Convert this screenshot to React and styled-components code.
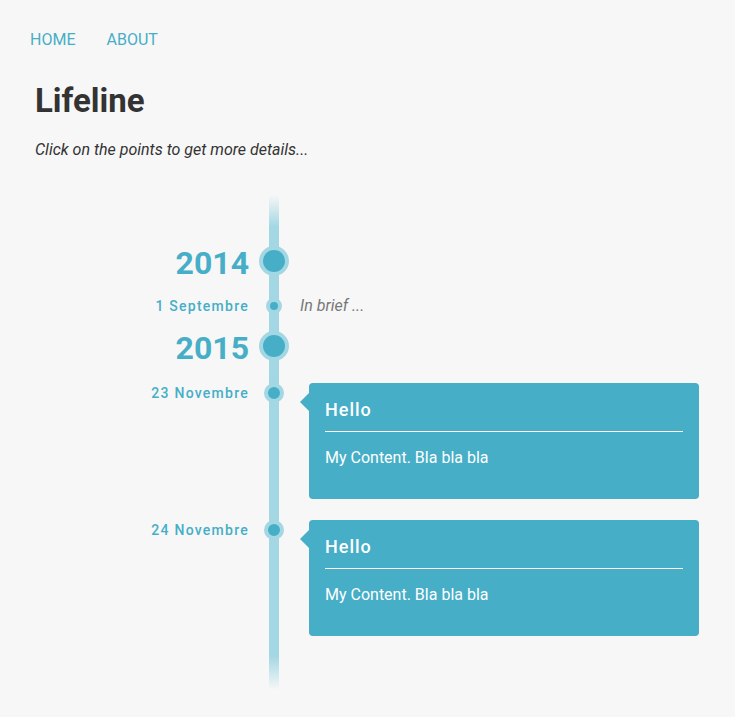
import React from "react";
import styled, { createGlobalStyle } from "styled-components";

const teal = "#46aec7";
const lightTeal = "#a3d7e3";

const GlobalStyle = createGlobalStyle`
  body {
    margin: 0;
    background: #f7f7f7;
    font-family: Roboto, "Liberation Sans", sans-serif;
    color: #333333;
  }
`;

const Nav = styled.nav`
  display: flex;
  gap: 31px;
  padding: 30px 30px 0;
`;

const NavLink = styled.a`
  color: ${teal};
  font-size: 16px;
  line-height: 19px;
  text-decoration: none;
  text-transform: uppercase;
  cursor: pointer;
`;

const Main = styled.main`
  padding: 0 35px;
`;

const Title = styled.h1`
  margin: 31px 0 0;
  font-size: 33px;
  line-height: 41px;
  font-weight: 700;
  color: #333333;
`;

const Subtitle = styled.p`
  margin: 19px 0 0;
  font-size: 16px;
  line-height: 19px;
  font-style: italic;
`;

const Timeline = styled.div`
  position: relative;
  margin-top: 36px;
  padding: 51px 0 54px;
  display: flex;
  flex-direction: column;

  &::before {
    content: "";
    position: absolute;
    top: 0;
    bottom: 0;
    left: 234px;
    width: 10px;
    background: linear-gradient(
      to bottom,
      rgba(163, 215, 227, 0) 0,
      ${lightTeal} 32px,
      ${lightTeal} calc(100% - 34px),
      rgba(163, 215, 227, 0) 100%
    );
  }
`;

const Row = styled.div`
  position: relative;
  display: grid;
  grid-template-columns: 224px 30px 410px;
  align-items: start;
  margin-top: ${({ $top }) => $top}px;
`;

const Label = styled.div`
  padding-right: 10px;
  text-align: right;
  color: ${teal};
`;

const Year = styled(Label)`
  margin: 2px 0 -2px;
  font-size: 32px;
  line-height: 30px;
  font-weight: 700;
`;

const DateLabel = styled(Label)`
  font-size: 14px;
  line-height: ${({ $h }) => $h}px;
  font-weight: 500;
  letter-spacing: 1.25px;
`;

const DotCell = styled.div`
  display: flex;
  justify-content: center;
`;

const Dot = styled.span`
  box-sizing: border-box;
  width: ${({ $size }) => $size}px;
  height: ${({ $size }) => $size}px;
  border-radius: 50%;
  background: ${teal};
  border: 4px solid ${lightTeal};
  cursor: pointer;
`;

const Content = styled.div`
  padding-left: 11px;
`;

const Brief = styled.div`
  color: #777777;
  font-style: italic;
  font-size: 16px;
  line-height: 16px;
`;

const Card = styled.div`
  position: relative;
  margin-left: 9px;
  padding: 16px;
  background: ${teal};
  border-radius: 4px;
  color: #ffffff;

  &::before {
    content: "";
    position: absolute;
    left: -9px;
    top: 10px;
    border-top: 9px solid transparent;
    border-bottom: 9px solid transparent;
    border-right: 9px solid ${teal};
  }
`;

const CardTitle = styled.h3`
  margin: 0;
  padding-bottom: 10px;
  border-bottom: 1px solid #ffffff;
  font-size: 18px;
  line-height: 22px;
  font-weight: 500;
  letter-spacing: 1px;
`;

const CardText = styled.p`
  margin: 16px 0 16px;
  font-size: 16px;
  line-height: 19px;
`;

const entries = [
  { type: "year", label: "2014", top: 0 },
  { type: "brief", label: "1 Septembre", text: "In brief ...", top: 22 },
  { type: "year", label: "2015", top: 17 },
  { type: "card", label: "23 Novembre", title: "Hello", text: "My Content. Bla bla bla", top: 22 },
  { type: "card", label: "24 Novembre", title: "Hello", text: "My Content. Bla bla bla", top: 21 }
];

function Entry({ entry }) {
  if (entry.type === "year") {
    return (
      <Row $top={entry.top}>
        <Year>{entry.label}</Year>
        <DotCell><Dot $size={30} /></DotCell>
        <Content />
      </Row>
    );
  }

  if (entry.type === "brief") {
    return (
      <Row $top={entry.top}>
        <DateLabel $h={16}>{entry.label}</DateLabel>
        <DotCell><Dot $size={16} /></DotCell>
        <Content>
          <Brief>{entry.text}</Brief>
        </Content>
      </Row>
    );
  }

  return (
    <Row $top={entry.top}>
      <DateLabel $h={20}>{entry.label}</DateLabel>
      <DotCell><Dot $size={20} /></DotCell>
      <Content>
        <Card>
          <CardTitle>{entry.title}</CardTitle>
          <CardText>{entry.text}</CardText>
        </Card>
      </Content>
    </Row>
  );
}

function App() {
  return (
    <>
      <GlobalStyle />
      <Nav>
        <NavLink>Home</NavLink>
        <NavLink>About</NavLink>
      </Nav>
      <Main>
        <Title>Lifeline</Title>
        <Subtitle>Click on the points to get more details...</Subtitle>
        <Timeline>
          {entries.map((entry) => (
            <Entry key={entry.label} entry={entry} />
          ))}
        </Timeline>
      </Main>
    </>
  );
}

export default App;
